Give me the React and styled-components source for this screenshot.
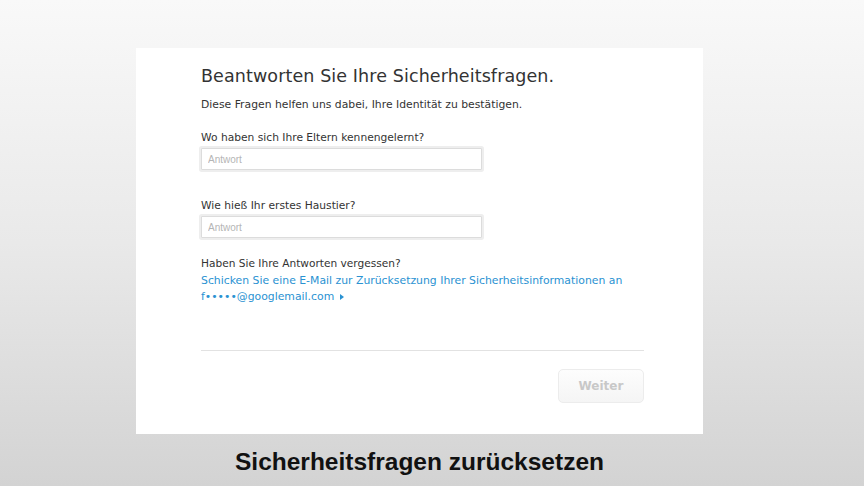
import styled, { createGlobalStyle } from 'styled-components'

const Global = createGlobalStyle`
    html, body {
        margin: 0;
        padding: 0;
    }
    body {
        width: 864px;
        height: 486px;
        overflow: hidden;
        background: linear-gradient(to bottom, #f9f9f9 0%, #e9e9e9 50%, #d3d3d3 100%);
        font-family: "DejaVu Sans", "Liberation Sans", sans-serif;
    }
`
const Page = styled.div`
    display: flex;
    flex-direction: column;
    align-items: center;
    padding: 48px 25px 0 0;
`
const Card = styled.div`
    width: 567px;
    height: 386px;
    box-sizing: border-box;
    background: #fff;
    padding: 18px 59px 0 65px;
    display: flex;
    flex-direction: column;
`
const Title = styled.h1`
    margin: 0;
    font-size: 17.5px;
    font-weight: 400;
    color: #333;
    letter-spacing: 0.1px;
`
const Intro = styled.p`
    margin: 12px 0 0;
    font-size: 10.8px;
    color: #333;
`
const Label = styled.label`
    display: block;
    margin-top: ${p => p.$top}px;
    font-size: 10.7px;
    color: #333;
`
const Input = styled.input`
    display: block;
    margin-top: 4px;
    width: 281px;
    height: 22px;
    box-sizing: border-box;
    border: 1px solid #dcdcdc;
    box-shadow: 0 0 0 2px #eeeeee;
    border-radius: 1px;
    padding: 0 6px;
    font-family: "Liberation Sans", sans-serif;
    font-size: 10px;
    color: #333;
    outline: none;
    &::placeholder {
        color: #b5b5b5;
    }
`
const Forgot = styled.div`
    margin-top: 19px;
    font-size: 10.6px;
    color: #333;
`
const Link = styled.a`
    display: block;
    margin-top: 4px;
    font-size: 10.85px;
    line-height: 16px;
    color: #2a92d2;
    text-decoration: none;
`
const Arrow = styled.span`
    display: inline-block;
    margin-left: 6px;
    width: 0;
    height: 0;
    border-top: 3.5px solid transparent;
    border-bottom: 3.5px solid transparent;
    border-left: 4px solid #2a92d2;
`
const Divider = styled.hr`
    margin: 45px 0 0;
    border: none;
    border-top: 1px solid #e2e2e2;
`
const Footer = styled.div`
    display: flex;
    justify-content: flex-end;
    margin-top: 18px;
`
const Button = styled.button`
    width: 86px;
    height: 34px;
    border: 1px solid #ececec;
    border-radius: 5px;
    background: linear-gradient(to bottom, #fdfdfd, #f5f5f5);
    font-family: "DejaVu Sans", sans-serif;
    font-size: 12px;
    font-weight: 700;
    color: #c8c8c8;
`
const Caption = styled.div`
    margin-top: 14px;
    font-family: "Liberation Sans", Arial, sans-serif;
    font-size: 24.5px;
    line-height: 28px;
    font-weight: 700;
    color: #111;
`

const App = () => {
    return (
        <>
            <Global />
            <Page>
                <Card>
                    <Title>Beantworten Sie Ihre Sicherheitsfragen.</Title>
                    <Intro>Diese Fragen helfen uns dabei, Ihre Identität zu bestätigen.</Intro>
                    <Label $top={20}>Wo haben sich Ihre Eltern kennengelernt?</Label>
                    <Input placeholder='Antwort' />
                    <Label $top={29}>Wie hieß Ihr erstes Haustier?</Label>
                    <Input placeholder='Antwort' />
                    <Forgot>Haben Sie Ihre Antworten vergessen?</Forgot>
                    <Link href='#'>
                        Schicken Sie eine E-Mail zur Zurücksetzung Ihrer Sicherheitsinformationen an<br />
                        f•••••@googlemail.com<Arrow />
                    </Link>
                    <Divider />
                    <Footer>
                        <Button>Weiter</Button>
                    </Footer>
                </Card>
                <Caption>Sicherheitsfragen zurücksetzen</Caption>
            </Page>
        </>
    )
}

export default App
